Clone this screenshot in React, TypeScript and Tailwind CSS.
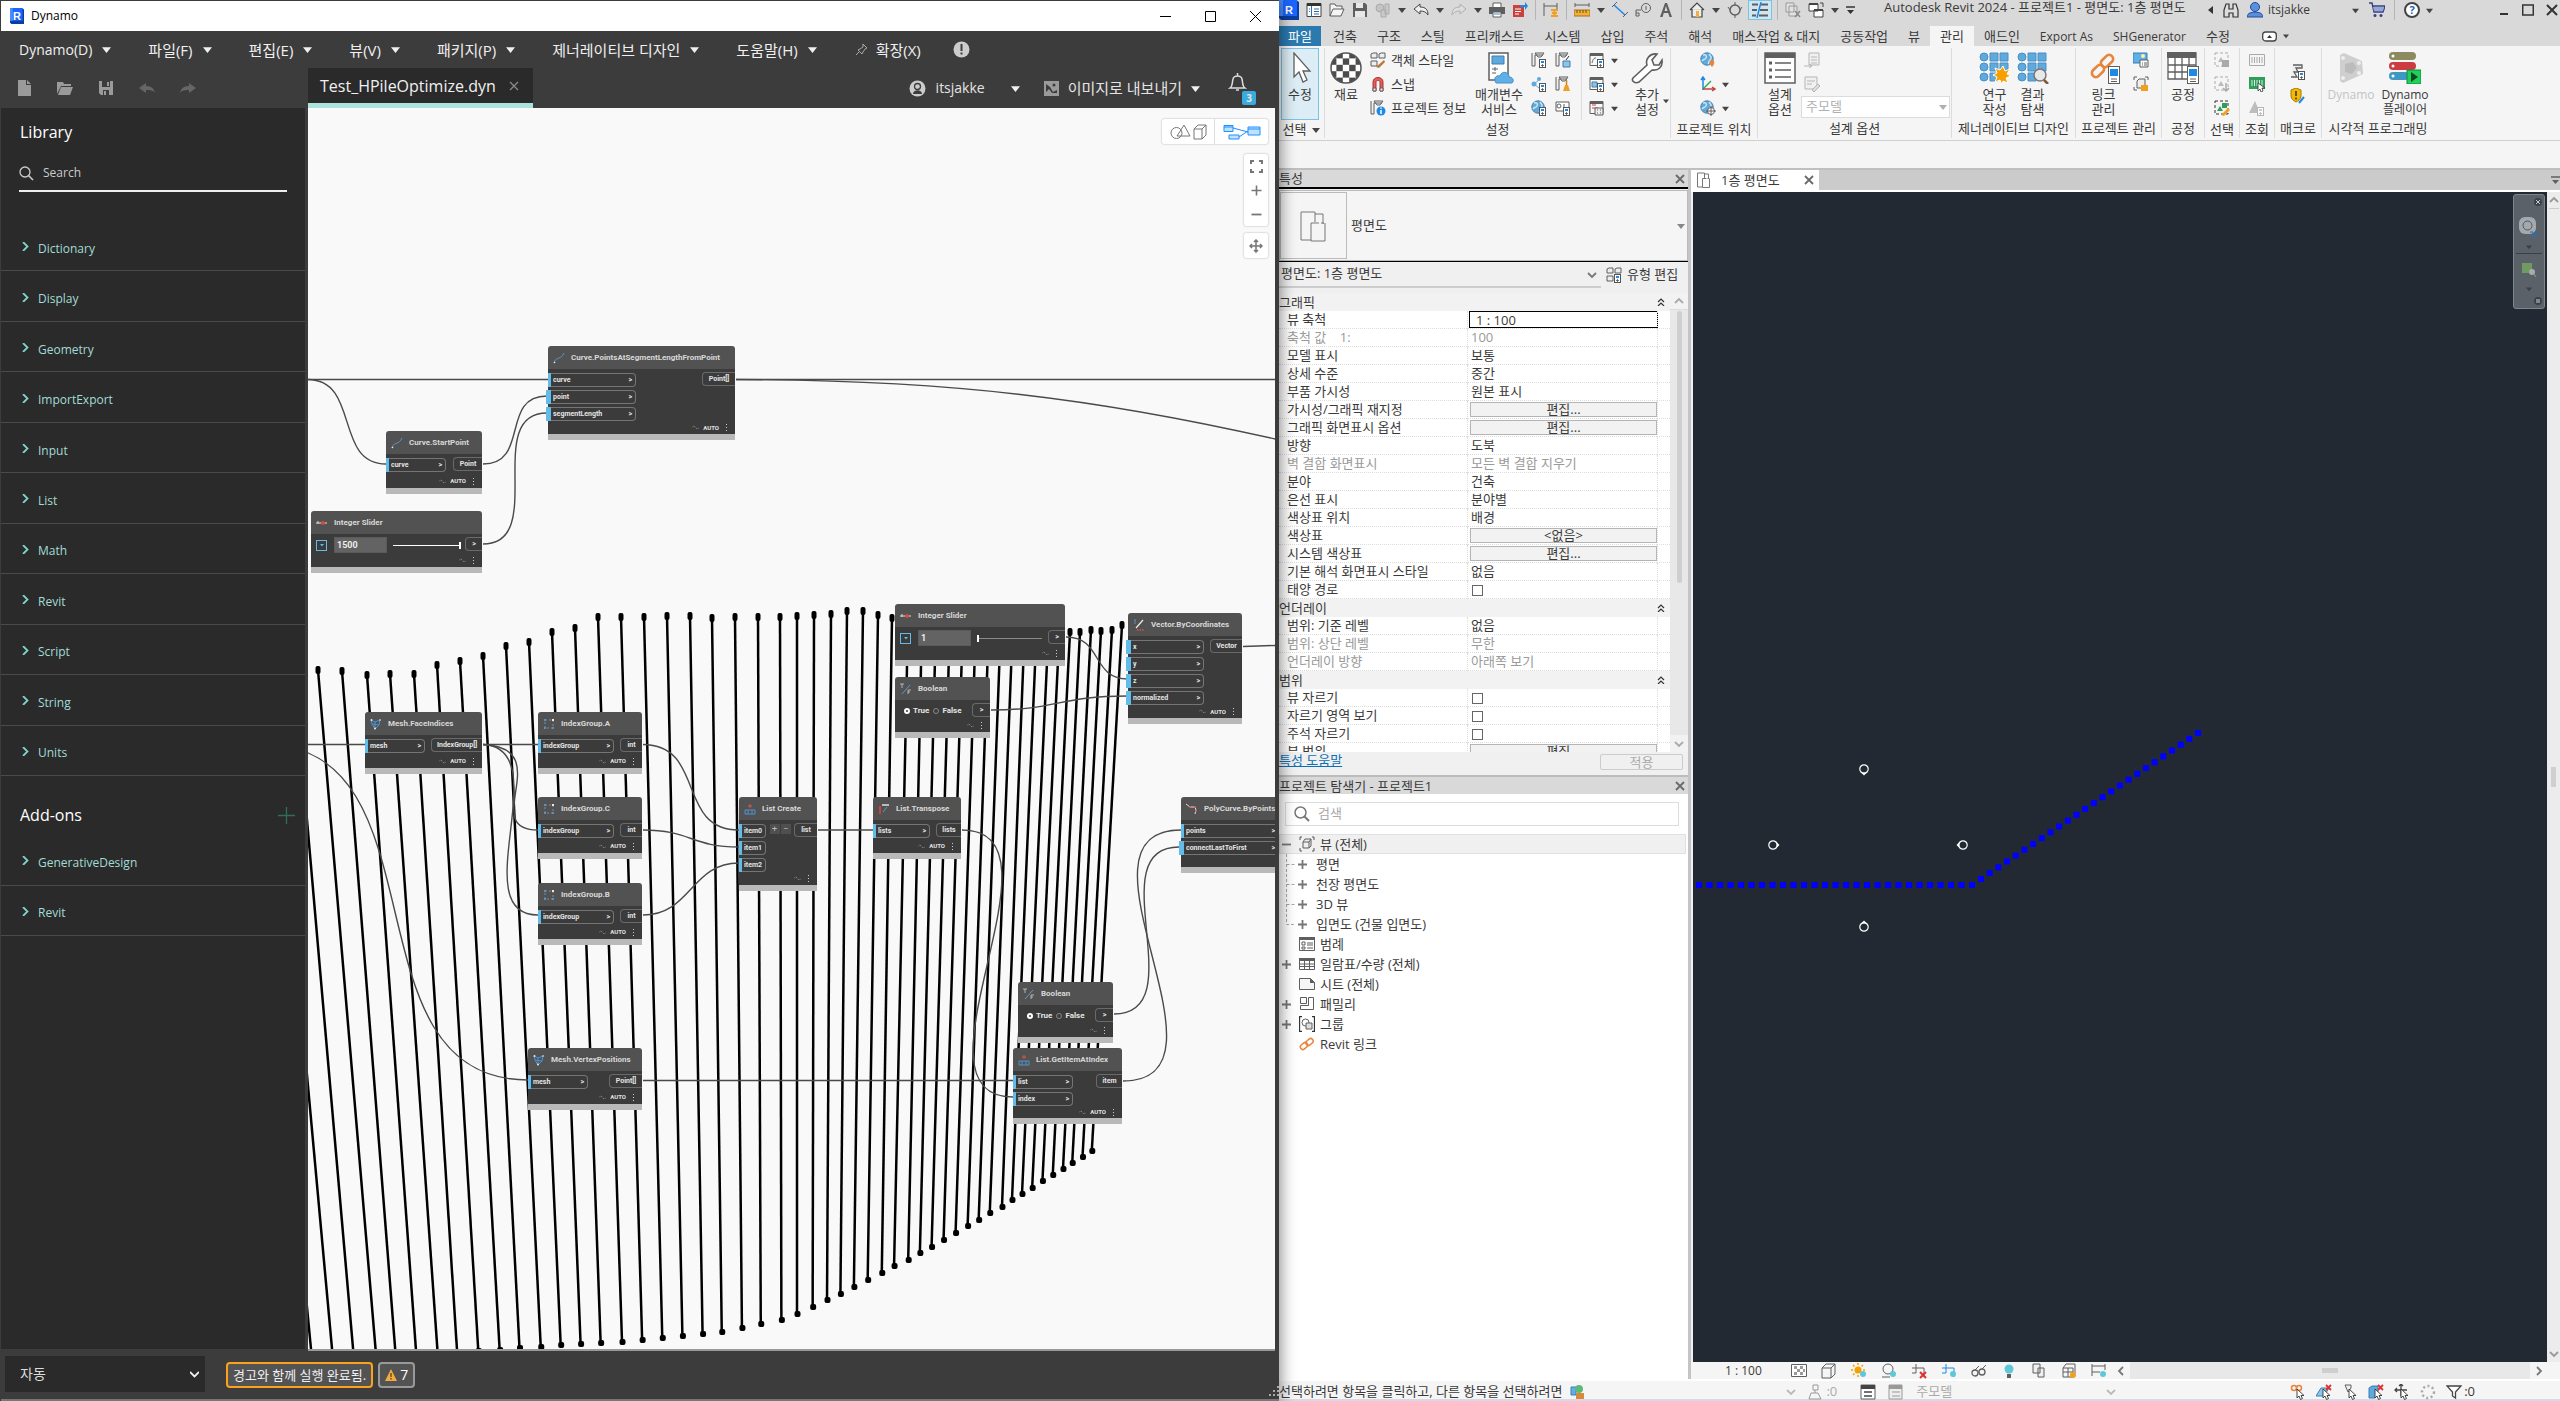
import React from "react";

type Kids = { children?: React.ReactNode };

/* ---------- icon helpers ---------- */

function Ico({ s = 16, b = 16, children, className = "" }: Kids & { s?: number; b?: number; className?: string }) {
  return (
    <svg width={s} height={s} viewBox={`0 0 ${b} ${b}`} fill="none" className={`shrink-0 ${className}`} aria-hidden="true">
      {children}
    </svg>
  );
}

function Tri({ c = "#444", w = 7 }: { c?: string; w?: number }) {
  return (
    <svg width={w} height={w} viewBox="0 0 8 8" className="shrink-0" aria-hidden="true">
      <path d="M0 2h8L4 7z" fill={c} />
    </svg>
  );
}

const G = "#5f5f5f";

function ParamBadge({ x = 8, y = 7, dim = false }: { x?: number; y?: number; dim?: boolean }) {
  const c = dim ? "#b5b5b5" : "#555";
  return (
    <g>
      <rect x={x + 0.5} y={y + 0.5} width="6" height="8" fill="#fff" stroke={c} />
      <rect x={x + 2} y={y + 2} width="3" height="2" fill={dim ? "#ccc" : "#1e88e5"} />
      <path d={`M${x + 2} ${y + 6.5}h3M${x + 3.5} ${y + 5}v3`} stroke={c} strokeWidth=".8" />
    </g>
  );
}

function Globe() {
  return (
    <g>
      <circle cx="7" cy="7" r="6.2" fill="#5fa9dd" stroke="#4a7fa5" />
      <path d="M3 3c3-1 4 1 3 3s-3 1-4 3M9 2c2 2 3 4 1 6s-1 3-2 4" stroke="#cfe6f5" strokeWidth="1.4" />
    </g>
  );
}

function RevitLogo({ w = 20, h = 20 }: { w?: number; h?: number }) {
  return (
    <span className="relative inline-flex shrink-0 items-center justify-center">
      <svg width={w} height={h} viewBox="0 0 20 20" preserveAspectRatio="none" aria-hidden="true">
        <path d="M0 0h17l3 2v18H2l-2-2z" fill="#0a3ea0" />
        <path d="M0 0h18v16H0z" fill="#1a66ff" />
        <path d="M0 0h4v16H0z" fill="#4a8cff" />
      </svg>
      <span className="absolute font-['Liberation_Sans',sans-serif] text-[11px] leading-[12px] font-bold text-white">R</span>
    </span>
  );
}

/* ---------- Dynamo: graph ---------- */

type Port = { t: string; wide?: boolean };
type GNode = {
  id: string;
  title: string;
  x: number;
  y: number;
  w: number;
  h: number;
  icon: string;
  ins?: Port[];
  inW?: number;
  out?: string;
  outW?: number;
  auto?: boolean;
  body?: "slider" | "bool" | "list";
  value?: string;
  pos?: number;
};

const NODES: GNode[] = [
  { id: "seg", title: "Curve.PointsAtSegmentLengthFromPoint", x: 240, y: 238, w: 187, h: 94, icon: "curve", ins: [{ t: "curve" }, { t: "point", wide: true }, { t: "segmentLength", wide: true }], inW: 88, out: "Point[]", outW: 33, auto: true },
  { id: "start", title: "Curve.StartPoint", x: 78, y: 323, w: 96, h: 63, icon: "curve", ins: [{ t: "curve" }], inW: 60, out: "Point", outW: 29, auto: true },
  { id: "sl1", title: "Integer Slider", x: 3, y: 403, w: 171, h: 62, icon: "slider", out: ">", outW: 17, body: "slider", value: "1500", pos: 100 },
  { id: "face", title: "Mesh.FaceIndices", x: 57, y: 604, w: 117, h: 62, icon: "mesh", ins: [{ t: "mesh" }], inW: 60, out: "IndexGroup[]", outW: 51, auto: true },
  { id: "iga", title: "IndexGroup.A", x: 230, y: 604, w: 104, h: 62, icon: "group", ins: [{ t: "indexGroup" }], inW: 76, out: "int", outW: 22, auto: true },
  { id: "igc", title: "IndexGroup.C", x: 230, y: 689, w: 104, h: 62, icon: "group", ins: [{ t: "indexGroup" }], inW: 76, out: "int", outW: 22, auto: true },
  { id: "igb", title: "IndexGroup.B", x: 230, y: 775, w: 104, h: 62, icon: "group", ins: [{ t: "indexGroup" }], inW: 76, out: "int", outW: 22, auto: true },
  { id: "vert", title: "Mesh.VertexPositions", x: 220, y: 940, w: 114, h: 62, icon: "mesh", ins: [{ t: "mesh" }], inW: 60, out: "Point[]", outW: 33, auto: true },
  { id: "lc", title: "List Create", x: 431, y: 689, w: 78, h: 94, icon: "list", ins: [{ t: "item0" }, { t: "item1" }, { t: "item2" }], inW: 27, out: "list", outW: 23, body: "list" },
  { id: "sl2", title: "Integer Slider", x: 587, y: 496, w: 170, h: 62, icon: "slider", out: ">", outW: 17, body: "slider", value: "1", pos: 0 },
  { id: "b1", title: "Boolean", x: 587, y: 569, w: 95, h: 61, icon: "bool", out: ">", outW: 18, body: "bool" },
  { id: "vec", title: "Vector.ByCoordinates", x: 820, y: 505, w: 114, h: 111, icon: "vector", ins: [{ t: "x", wide: true }, { t: "y", wide: true }, { t: "z", wide: true }, { t: "normalized", wide: true }], inW: 76, out: "Vector", outW: 32, auto: true },
  { id: "tr", title: "List.Transpose", x: 565, y: 689, w: 88, h: 62, icon: "transpose", ins: [{ t: "lists" }], inW: 57, out: "lists", outW: 25, auto: true },
  { id: "poly", title: "PolyCurve.ByPoints", x: 873, y: 689, w: 150, h: 76, icon: "poly", ins: [{ t: "points" }, { t: "connectLastToFirst", wide: true }], inW: 98 },
  { id: "b2", title: "Boolean", x: 710, y: 874, w: 95, h: 61, icon: "bool", out: ">", outW: 18, body: "bool" },
  { id: "get", title: "List.GetItemAtIndex", x: 705, y: 940, w: 109, h: 76, icon: "list", ins: [{ t: "list" }, { t: "index" }], inW: 60, out: "item", outW: 26, auto: true },
];

function NodeIcon({ k }: { k: string }) {
  return (
    <Ico s={12} b={12}>
      {k === "curve" && <><path d="M1 11c1-4 3-4 5-5s3-1 5-5" stroke="#5d9ad6" /><circle cx="1.5" cy="10.5" r=".8" fill="#eee" /></>}
      {k === "slider" && <><path d="M0 6h11" stroke="#ddd" /><circle cx="7" cy="6" r="2" fill="#d24a43" /><path d="M2 4v3" stroke="#ddd" /></>}
      {k === "mesh" && <><path d="M1 2l4 2 5-2-1 5-4 4-3-5zM5 4l0 7M2 6l7 1" stroke="#4f93cf" /><circle cx="1.5" cy="2" r="1" fill="#dfe9f2" /><circle cx="10" cy="2" r="1" fill="#8fc2ea" /><circle cx="5" cy="10.5" r="1" fill="#dfe9f2" /></>}
      {k === "group" && <><path d="M2 2h8v8H2z" stroke="#8a8a8a" strokeDasharray="2 2" /><path d="M1 1h2v2H1zM9 9h2v2H9zM1 9h2v2H1z" fill="#4f93cf" /><path d="M9 1h2v2H9z" fill="#e8e8e8" /></>}
      {k === "list" && <><path d="M1 7h10v4H1zM4 7v4M8 7v4" stroke="#4f93cf" /><path d="M4 3h4M6 1v4" stroke="#d9544f" /></>}
      {k === "bool" && <><path d="M2 11L10 2" stroke="#5d9ad6" /><path d="M0 1h4M2 1v4M8 11V7h3M8 9h2" stroke="#ccc" strokeWidth=".8" /></>}
      {k === "vector" && <><path d="M3 9L10 1" stroke="#eee" strokeWidth="1.2" /><path d="M1 1l2 0M2 1v4" stroke="#5d9ad6" strokeWidth=".8" /><path d="M4 11h7" stroke="#d9544f" strokeWidth="1.5" strokeDasharray="1.5 1" /></>}
      {k === "transpose" && <><path d="M1 3h2v8H1z" fill="#c8433d" /><path d="M4 1h7v2H4z" fill="#bbb" /><path d="M5 9l4-5" stroke="#5d9ad6" /></>}
      {k === "poly" && <><path d="M0 1l4 3 5 0 1 3-1 4" stroke="#ddd" /><circle cx="4" cy="4" r="1" fill="#d9544f" /><circle cx="9" cy="4" r="1" fill="#d9544f" /><circle cx="10" cy="8" r="1" fill="#d9544f" /></>}
    </Ico>
  );
}

function GraphNode({ n }: { n: GNode }) {
  return (
    <section
      className="absolute flex flex-col overflow-visible text-[#e4e4e4]"
      style={{ left: n.x, top: n.y, width: n.w, height: n.h }}
    >
      <header className="flex h-[23px] shrink-0 items-center gap-[6px] rounded-t-[3px] bg-[#525252] pl-[5px]">
        <NodeIcon k={n.icon} />
        <h3 className="min-w-0 flex-1 text-[8px] leading-[12px] font-bold whitespace-nowrap text-[#d8d8d8]">{n.title}</h3>
      </header>
      <div className="flex min-h-0 flex-1 flex-col justify-between bg-[#3b3b3b] pt-[3px]">
        <div className="flex items-start justify-between">
          {n.ins && (
            <div className="flex flex-col gap-[2px]">
              {n.ins.map((p) => (
                <div key={p.t} className="flex h-[15px] items-center" style={{ width: n.inW }}>
                  <i className={`h-[14px] shrink-0 bg-[#63bbe7] ${p.wide ? "-ml-[2px] w-[5px]" : "w-[3px]"}`} />
                  <span className="flex h-[14px] min-w-0 flex-1 items-center justify-between rounded-r-[4px] border border-l-0 border-[#757575] pr-[3px] pl-[2px] text-[7px] leading-[10px] font-bold">
                    <span className="whitespace-nowrap">{p.t}</span>
                    {n.body !== "list" && <span>&gt;</span>}
                  </span>
                </div>
              ))}
            </div>
          )}
          {n.body === "list" && (
            <div className="flex gap-px pt-[1px]">
              <button aria-label="Add item" className="h-[10px] w-[10px] bg-[#4f4f4f] text-[9px] leading-[9px] text-[#bbb]">+</button>
              <button aria-label="Remove item" className="h-[10px] w-[10px] bg-[#4f4f4f] text-[9px] leading-[9px] text-[#bbb]">−</button>
            </div>
          )}
          {n.body === "slider" && (
            <div className="flex min-w-0 flex-1 items-center pl-[5px]">
              <button aria-label="Slider settings" className="flex h-[11px] w-[11px] items-center justify-center border border-[#63bbe7]"><Tri c="#63bbe7" w={4} /></button>
              <input aria-label={`${n.id} value`} defaultValue={n.value} className="ml-[7px] h-[16px] w-[53px] border border-[#5a5a5a] bg-[#636363] pl-[2px] text-[9px] leading-[12px] font-bold text-[#eee]" />
              <span className="relative mx-[6px] flex h-[16px] flex-1 items-center">
                <i className={`h-px w-full ${n.pos ? "bg-white" : "bg-[#8a8a8a]"}`} />
                <i className="absolute h-[7px] w-[2px] bg-white" style={{ left: `${n.pos}%` }} />
              </span>
            </div>
          )}
          {n.body === "bool" && (
            <div className="flex h-[15px] items-center pl-[9px] text-[8px] leading-[12px] font-bold">
              <label className="flex items-center gap-[3px]">
                <input type="radio" name={n.id} defaultChecked className="h-[6px] w-[6px] appearance-none rounded-full border border-[#888] checked:border-2 checked:border-white" />
                True
              </label>
              <label className="ml-[4px] flex items-center gap-[3px]">
                <input type="radio" name={n.id} className="h-[6px] w-[6px] appearance-none rounded-full border border-[#888]" />
                False
              </label>
            </div>
          )}
          {n.out && (
            <div className="flex h-[14px] shrink-0 items-center justify-center rounded-l-[4px] border border-r-0 border-[#6a6a6a] text-[7px] leading-[10px] font-bold" style={{ width: n.outW }}>
              {n.out}
            </div>
          )}
        </div>
        <div className="flex h-[14px] items-center justify-end gap-[4px] pr-[5px] text-[6px] leading-[8px] font-bold">
          <Ico s={7} b={8}><path d="M0 4l2-2 2 2 2 2 2-2" stroke="#8a8a8a" strokeDasharray="2 1" /></Ico>
          {n.auto && <span>AUTO</span>}
          <Ico s={7} b={7}><path d="M3 0h1v1H3zM3 3h1v1H3zM3 6h1v1H3z" fill="#ccc" /></Ico>
        </div>
      </div>
      <i className="h-[6px] shrink-0 bg-[#b9b9b9]" />
    </section>
  );
}

/* Wires, in canvas coordinates. */
const WIRES = [
  "M0 271.500H240",
  "M0 271.500C52 272 26 356 78 356",
  "M175 356C222 356 192 288 239 288",
  "M175 436C240 436 174 305 239 305",
  "M428 271.500H980",
  "M428 271.500C640 272 790 290 980 334",
  "M0 636.500H57",
  "M-46 636C140 636 34 972 220 972",
  "M175 636.500H230",
  "M175 636.500C250 640 170 722 230 722",
  "M175 636.500C250 640 155 807 230 807",
  "M335 636.500C398 637 368 722 431 722",
  "M335 722C383 722 383 739 431 739",
  "M335 807C383 807 383 755 431 755",
  "M510 722H565",
  "M654 722C767 722 592 989 705 989",
  "M335 972.500H705",
  "M758 529C795 529 783 571 820 571",
  "M683 602C750 602 750 588 820 588",
  "M935 538.500L980 537",
  "M815 973C937 973 751 722 873 722",
  "M806 906C887 906 790 739 871 739",
];

/* Piles: [x at head, y at head, x at y=1130 window line, y of foot]. */
const PILES: [number, number, number, number][] = [
  [246, 671, 290, 1360], [270, 671, 312, 1360], [294, 671, 334, 1360],
  [318, 670, 357, 1360], [342, 671, 378, 1360], [367, 675, 400, 1360], [390, 674, 422, 1360], [414, 674, 443, 1360],
  [437, 665, 465, 1351], [460, 661, 487, 1350], [483, 656, 508, 1348], [506, 646, 530, 1347], [529, 642, 551, 1345],
  [552, 632, 572, 1344], [575, 628, 593, 1343], [598, 617, 615, 1342], [621, 617, 636, 1340], [644, 617, 657, 1338],
  [667, 616, 678, 1336], [690, 616, 699, 1334], [712, 618, 719, 1332], [735, 617, 740, 1328], [758, 617, 760, 1324],
  [780, 617, 781, 1320], [797, 616, 797, 1314], [814, 615, 813, 1307], [831, 614, 828, 1300], [847, 611, 842, 1294],
  [863, 611, 856, 1287], [878, 615, 870, 1280], [892, 618, 884, 1273], [908, 620, 897, 1266], [922, 620, 911, 1260],
  [936, 620, 923, 1253], [950, 620, 935, 1247], [963, 620, 947, 1240], [976, 620, 959, 1233], [989, 620, 971, 1226],
  [1001, 620, 982, 1220], [1013, 620, 993, 1213], [1025, 620, 1005, 1207], [1037, 620, 1015, 1200], [1049, 620, 1025, 1194],
  [1060, 620, 1035, 1188], [1070, 632, 1045, 1181], [1080, 632, 1055, 1175], [1091, 630, 1065, 1169], [1101, 631, 1074, 1163],
  [1112, 630, 1084, 1157], [1122, 625, 1093, 1151],
];

function Canvas() {
  return (
    <main className="relative min-w-0 flex-1 overflow-hidden border-b-2 border-[#999] bg-[#f9f9f9] font-['Roboto',sans-serif]">
      <svg className="absolute inset-0 h-full w-full" aria-hidden="true">
        <g transform="translate(-308 -108)">
          {PILES.map(([x0, y0, xm, y1], i) => {
            const x1 = x0 + ((xm - x0) * (y1 - y0)) / (1130 - y0);
            return (
              <g key={i}>
                <path d={`M${x0} ${y0}L${x1} ${y1}`} stroke="#000" strokeWidth="2.500" />
                <rect x={x0 - 2.5} y={y0 - 4} width="5" height="8" rx="2" />
                <rect x={x1 - 2.5} y={y1 - 3} width="6" height="6" rx="2" />
              </g>
            );
          })}
        </g>
        {WIRES.map((d) => (
          <path key={d} d={d} fill="none" stroke="#4a4a4a" strokeWidth="1.400" />
        ))}
      </svg>
      {NODES.map((n) => (
        <GraphNode key={n.id} n={n} />
      ))}
      <div className="absolute top-[11px] right-[7px] flex flex-col items-end">
        <div className="flex h-[25px] rounded-[2px] bg-white shadow-[0_0_2px_rgba(0,0,0,0.35)]">
          <button aria-label="3D preview" className="flex w-[53px] items-center justify-center border-r border-[#ddd]">
            <svg width="37" height="16" viewBox="0 0 37 16" fill="none" stroke="#777" aria-hidden="true">
              <circle cx="6.500" cy="9" r="5.500" /><path d="M7 12L14 1l6 11zM24 5h8v10h-8zM24 5l4-4h8v10l-4 4M32 5l4-4" />
            </svg>
          </button>
          <button aria-label="Graph view" className="flex w-[53px] items-center justify-center">
            <svg width="38" height="16" viewBox="0 0 38 16" fill="#bfe3ff" stroke="#1e90ff" aria-hidden="true">
              <path d="M10 4l15 4M16 13l9-6" fill="none" />
              <path d="M1 1.500h9v6H1zM1 3h9M25 3h12v8H25zM25 5h12M6 11h10v4H6z" />
            </svg>
          </button>
        </div>
        <div className="mt-[10px] flex h-[72px] w-[24px] flex-col items-center justify-around rounded-[2px] bg-white shadow-[0_0_2px_rgba(0,0,0,0.35)]">
          <button aria-label="Fit view"><Ico s={13} b={13}><path d="M1 4V1h3M9 1h3v3M12 9v3H9M4 12H1V9" stroke="#777" strokeWidth="2" /></Ico></button>
          <button aria-label="Zoom in"><Ico s={13} b={13}><path d="M1.500 6.500h10M6.500 1.500v10" stroke="#777" strokeWidth="1.600" /></Ico></button>
          <button aria-label="Zoom out"><Ico s={13} b={13}><path d="M1.500 6.500h10" stroke="#777" strokeWidth="1.800" /></Ico></button>
        </div>
        <div className="mt-[7px] flex h-[25px] w-[24px] items-center justify-center rounded-[2px] bg-white shadow-[0_0_2px_rgba(0,0,0,0.35)]">
          <button aria-label="Pan"><Ico s={14} b={14}><path d="M7 1v12M1 7h12M5 3l2-2 2 2M5 11l2 2 2-2M3 5L1 7l2 2M11 5l2 2-2 2" stroke="#777" strokeWidth="1.500" /></Ico></button>
        </div>
      </div>
    </main>
  );
}

/* ---------- Dynamo: chrome ---------- */

const MENUS = ["Dynamo(D)", "파일(F)", "편집(E)", "뷰(V)", "패키지(P)", "제너레이티브 디자인", "도움말(H)"];
const LIB = ["Dictionary", "Display", "Geometry", "ImportExport", "Input", "List", "Math", "Revit", "Script", "String", "Units"];

function LibRow({ t }: { t: string }) {
  return (
    <li className="border-b border-[#4a4a4a]">
      <button className="flex h-full w-full items-center gap-2 pt-[6px] pl-[20px] text-[12px] leading-[16px] text-[#a3dcd6]">
        <Ico s={9} b={9} className="mb-[4px]"><path d="M2 0l4.500 4.500L2 9" stroke="#7fd3ca" strokeWidth="1.800" /></Ico>
        {t}
      </button>
    </li>
  );
}

function Dynamo() {
  const g = "#9a9a9a";
  return (
    <div className="relative z-10 flex min-w-0 flex-[1278_1_0%] flex-col border-t border-l border-[#3c3c3c] bg-[#3c3c3c] font-['Open_Sans','Noto_Sans_CJK_KR',sans-serif] text-white shadow-[2px_0_14px_rgba(0,0,0,0.45)]">
      <div className="flex h-[30px] shrink-0 items-center bg-white pl-[9px] text-black">
        <RevitLogo w={14} h={16} />
        <h1 className="ml-[7px] text-[12px] leading-[18px]">Dynamo</h1>
        <div className="ml-auto flex items-center gap-[34px] pr-[18px]">
          <button aria-label="Minimize"><Ico s={11} b={11}><path d="M0 5.500h11" stroke="#000" /></Ico></button>
          <button aria-label="Maximize"><Ico s={11} b={11}><path d="M.5.5h10v10H.5z" stroke="#000" /></Ico></button>
          <button aria-label="Close"><Ico s={11} b={11}><path d="M0 0l11 11M11 0L0 11" stroke="#000" /></Ico></button>
        </div>
      </div>
      <nav className="flex h-[37px] shrink-0 items-center text-[15px] leading-[20px] text-[#f0f0f0]">
        {MENUS.map((m) => (
          <button key={m} className={`flex items-center gap-[10px] pr-[19px] pl-[18px] whitespace-nowrap ${m.startsWith("Dynamo") ? "text-[14px]" : ""}`}>
            {m}
            <Tri c="#f0f0f0" w={9} />
          </button>
        ))}
        <button className="ml-[19px] flex items-center gap-[8px] whitespace-nowrap">
          <Ico s={13} b={13}><path d="M8 1l4 4-2 1-2 3-1 2-4-4 2-1 3-2zM5 8l-4 4" stroke="#aaa" /></Ico>
          확장(X)
        </button>
        <button aria-label="Alert" className="ml-[32px]">
          <Ico s={17} b={17}><circle cx="8.500" cy="8.500" r="8" fill="#ccc" /><path d="M8.500 3v7M8.500 11.500v2" stroke="#3c3c3c" strokeWidth="2" /></Ico>
        </button>
      </nav>
      <div className="flex h-[40px] shrink-0 items-center">
        <div className="flex w-[307px] items-center gap-[25px] pl-[15px]">
          <button aria-label="New"><Ico><path d="M2 0h8v5h5v11H2zM11 0l4 4h-4z" fill={g} /></Ico></button>
          <button aria-label="Open"><Ico><path d="M0 2h6l1 2h7v2H4L0 14zM4 7h12l-3 8H1z" fill={g} /></Ico></button>
          <button aria-label="Save"><Ico><path d="M1 1h14v14H3l-2-2zM4 1v6h8V1zM5 10v5h6v-5zM9 2h2v4H9zM6 11h2v4H6z" fill={g} fillRule="evenodd" /></Ico></button>
          <button aria-label="Undo"><Ico><path d="M0 8l7-5v3c6 0 8 3 9 7-2-3-5-3-9-3v3z" fill="#666" /></Ico></button>
          <button aria-label="Redo"><Ico><path d="M16 8L9 3v3c-6 0-8 3-9 7 2-3 5-3 9-3v3z" fill="#666" /></Ico></button>
        </div>
        <div className="flex h-full items-center border-b-[5px] border-[#abe2dc] bg-[#2a2a2a] pr-[14px] pl-[12px]">
          <span className="text-[16px] leading-[22px] text-[#f0f0f0]">Test_HPileOptimize.dyn</span>
          <button aria-label="Close tab" className="ml-[13px]"><Ico s={10} b={10}><path d="M1 1l8 8M9 1L1 9" stroke="#8a8a8a" strokeWidth="1.300" /></Ico></button>
        </div>
        <div className="ml-auto flex items-center pr-[32px] text-[14px] leading-[20px] text-[#e4e4e4]">
          <button className="flex items-center gap-[10px]">
            <Ico s={17} b={17}><circle cx="8.500" cy="8.500" r="8" fill="#ccc" /><circle cx="8.500" cy="6.500" r="3" stroke="#3c3c3c" strokeWidth="1.300" /><path d="M4 14c0-5 9-5 9 0z" fill="#3c3c3c" /></Ico>
            itsjakke
            <span className="ml-[16px] flex"><Tri c="#f0f0f0" w={9} /></span>
          </button>
          <button className="ml-[24px] flex items-center gap-[9px] text-[15px] whitespace-nowrap">
            <Ico s={15} b={15}><path d="M0 0h15v15H0zM2 3v8l3-3 3 4 5 0V9L9 11 6 6z" fill={g} fillRule="evenodd" /><circle cx="10" cy="4" r="1.500" fill="#3c3c3c" /></Ico>
            이미지로 내보내기
            <Tri c="#f0f0f0" w={9} />
          </button>
          <button aria-label="Notifications, 3" className="relative mb-[11px] ml-[28px]">
            <Ico s={19} b={19}><path d="M2 15c3-2 2-6 3-9 1-4 8-4 9 0s0 7 3 9zM8 17h3M9.500 0v3" stroke="#ddd" strokeWidth="1.500" /></Ico>
            <span className="absolute top-[18px] left-[14px] flex h-[14px] w-[14px] items-center justify-center rounded-[2px] bg-[#38abdf] text-[10px] leading-[12px] font-bold">3</span>
          </button>
        </div>
      </div>
      <div className="flex min-h-0 flex-1 pr-[4px]">
        <aside className="mr-[3px] mb-[2px] flex w-[304px] shrink-0 flex-col overflow-hidden bg-[#2a2a2a]">
          <h2 className="mt-[14px] ml-[19px] text-[16px] leading-[20px]">Library</h2>
          <label className="mt-[20px] mr-[18px] ml-[18px] flex h-[30px] items-center gap-[9px] border-b-2 border-[#eee] pb-[6px]">
            <Ico s={15} b={15}><circle cx="6" cy="6" r="5" stroke="#ccc" strokeWidth="1.300" /><path d="M9.500 9.500L14 14" stroke="#ccc" strokeWidth="1.600" /></Ico>
            <input aria-label="Search" placeholder="Search" className="min-w-0 flex-1 bg-transparent text-[12px] leading-[16px] placeholder:text-[#ccc]" />
          </label>
          <ul className="mt-[29px] grid h-[555px] shrink-0 auto-rows-fr">
            {LIB.map((t) => <LibRow key={t} t={t} />)}
          </ul>
          <div className="mt-[29px] flex items-center justify-between pr-[10px] pl-[19px]">
            <h2 className="text-[16px] leading-[20px]">Add-ons</h2>
            <button aria-label="Add"><Ico s={17} b={17}><path d="M0 8.500h17M8.500 0v17" stroke="#2f6f56" strokeWidth="1.300" /></Ico></button>
          </div>
          <ul className="mt-[10px] grid h-[101px] shrink-0 auto-rows-fr">
            <LibRow t="GenerativeDesign" />
            <LibRow t="Revit" />
          </ul>
        </aside>
        <Canvas />
      </div>
      <footer className="flex h-[50px] shrink-0 items-center border-b-2 border-[#777] pl-[4px] text-[13px] leading-[18px]">
        <div className="relative mb-[2px] h-[36px] w-[200px]">
          <select aria-label="실행 모드" className="h-full w-full appearance-none bg-[#2a2a2a] pl-[15px] text-[14px] text-[#ddd]"><option>자동</option></select>
          <Ico s={9} b={9} className="pointer-events-none absolute top-[14px] right-[6px]"><path d="M0 2l4.500 4.500L9 2" stroke="#eee" strokeWidth="1.800" /></Ico>
        </div>
        <div className="ml-[21px] flex h-[26px] items-center rounded-[4px] border-2 border-[#faa21b] bg-[#535353] px-[5px] whitespace-nowrap text-[#f0f0f0]">경고와 함께 실행 완료됨.</div>
        <button className="ml-[5px] flex h-[26px] items-center gap-[3px] rounded-[4px] border-2 border-[#999] bg-[#535353] px-[5px] text-[14px]">
          <Ico s={12} b={12}><path d="M6 0l6 12H0z" fill="#f2ab42" /><path d="M6 4v4M6 9v1.500" stroke="#6b4a12" strokeWidth="1.400" /></Ico>
          7
        </button>
        <span className="ml-auto self-end pb-[2px]"><Ico s={11} b={11}><path d="M9 0h2v2H9zM9 4h2v2H9zM5 4h2v2H5zM9 8h2v2H9zM5 8h2v2H5zM1 8h2v2H1z" fill="#aaa" /></Ico></span>
      </footer>
    </div>
  );
}

/* ---------- Revit ---------- */

const QAT: { n: string; i: React.ReactNode }[] = [
  { n: "보기", i: <><path d="M1 1.500h14v13H1z" fill="#fff" stroke="#444" /><path d="M1 1h14v3H1z" fill="#333" /><path d="M5.500 4v11M8 7h5M8 9.500h5M8 12h5M3 7h1M3 9.500h1" stroke="#2a6fb0" /></> },
  { n: "열기", i: <path d="M1 14V2h5l1 2h6v3M1 14l3-7h11l-3 7z" fill="#f5f5f5" stroke={G} /> },
  { n: "저장", i: <><path d="M1 1h12l2 2v12H1z" fill={G} /><path d="M4 1h7v5H4zM3 9h10v6H3z" fill="#e8e8e8" /></> },
  { n: "동기화", i: <><circle cx="5" cy="6" r="4" fill="#c4c4c4" stroke="#aaa" /><path d="M6 8h5v7H6zM10 2h4v10h-4z" fill="#c9c9c9" stroke="#aaa" /></> },
  { n: "|t", i: null },
  { n: "명령취소", i: <path d="M1 7l6-5v3c6 0 8 3 8 8-2-3-4-4-8-4v3z" stroke="#444" fill="#eee" /> },
  { n: "|t", i: null },
  { n: "명령복구", i: <path d="M15 7L9 2v3C3 5 1 8 1 13c2-3 4-4 8-4v3z" stroke="#b0b0b0" fill="#ddd" /> },
  { n: "|t", i: null },
  { n: "인쇄", i: <><path d="M4 1h8v5H4z" fill="#fff" stroke={G} /><path d="M0 5h16v7H0z" fill={G} /><path d="M4 10h8v5H4z" fill="#fff" stroke={G} /><path d="M5 12h6" stroke="#3a8fd0" /></> },
  { n: "내보내기", i: <><path d="M1 3h11v12H1z" fill="#c8433d" /><path d="M3 7h6M3 9.500h6M3 12h4" stroke="#fff" /><path d="M8 3h5V0l3 4-3 4V5H8z" fill="#1e88e5" /></> },
  { n: "|s", i: null },
  { n: "치수", i: <><path d="M1 1v13M14 1v6M1 4h13" stroke={G} /><path d="M8 8h7M9 11h5M11.500 8v7M8 14h7" stroke="#f0a020" strokeWidth="2" /></> },
  { n: "|s", i: null },
  { n: "측정", i: <><path d="M1 3h14M1 1v4M15 1v4" stroke={G} /><path d="M0 8h16v6H0z" fill="#f0b040" stroke="#a87410" /><path d="M3 8v3M6 8v3M9 8v3M12 8v3" stroke="#7a5200" /></> },
  { n: "|t", i: null },
  { n: "정렬 치수", i: <><path d="M2 3l11 10" stroke="#1e88e5" strokeWidth="1.500" /><path d="M0 5l5-5M11 15l5-5" stroke={G} /></> },
  { n: "태그", i: <><circle cx="11" cy="6" r="4.500" stroke={G} /><path d="M11 4v4M1 14V8h5M1 14h3v-3H1" stroke={G} /></> },
  { n: "문자", i: <path d="M2 15L7 1h2l5 14h-2.500l-1.300-4H5.800l-1.300 4zM6.500 9h3L8 4z" fill={G} fillRule="evenodd" /> },
  { n: "|s", i: null },
  { n: "3D", i: <><path d="M1 8l7-7 7 7M3 7v8h10V7" fill="#eee" stroke="#444" strokeWidth="1.200" /><path d="M7 9h3v6H7z" fill="#f0b040" /></> },
  { n: "|t", i: null },
  { n: "단면", i: <><circle cx="8" cy="8" r="5" stroke={G} strokeWidth="1.500" /><path d="M8 13v3M3 8l-2-3M13 8l2-3M8 3V0" stroke={G} /></> },
  { n: "|h", i: <><path d="M0 2.500h6M9 2.500h7M0 8h5M8 8h8M0 13.500h4M7 13.500h9" stroke={G} strokeWidth="2" /><path d="M9 0L5 16" stroke="#1e88e5" strokeWidth="1.500" /></> },
  { n: "|s", i: null },
  { n: "창 닫기", i: <><path d="M1 1h8v9H1zM4 4h8v10H4z" fill="#e2e2e2" stroke="#999" /><path d="M10 9l5 6M15 9l-5 6" stroke="#888" strokeWidth="1.500" /></> },
  { n: "창 전환", i: <><path d="M1 2h9v7H1zM6 8h9v7H6z" fill="#fff" stroke="#444" /><path d="M6 7h9v2H6zM1 1h9v2H1z" fill="#444" /><path d="M12 1h3v4" stroke="#444" /></> },
  { n: "|t", i: null },
];

const TABS = ["건축", "구조", "스틸", "프리캐스트", "시스템", "삽입", "주석", "해석", "매스작업 & 대지", "공동작업", "뷰", "관리", "애드인", "Export As", "SHGenerator", "수정"];

function Panel({ w, label, children, last }: Kids & { w: number; label: React.ReactNode; last?: boolean }) {
  return (
    <div className={`my-[2px] flex shrink-0 flex-col ${last ? "" : "border-r border-[#dcdcdc]"}`} style={{ width: w }}>
      <div className="flex h-[73px] justify-center">{children}</div>
      <div className="flex items-center justify-center gap-[6px] text-center leading-[19px] whitespace-nowrap">{label}</div>
    </div>
  );
}

function Big({ icon, lines, w, dim, latin, children }: Kids & { icon: React.ReactNode; lines: string[]; w: number; dim?: boolean; latin?: boolean }) {
  return (
    <button className={`relative flex shrink-0 flex-col items-center pt-[4px] leading-[15px] ${dim ? "text-[#c4c4c4]" : ""} ${latin ? "text-[12px]" : ""}`} style={{ width: w }}>
      <Ico s={32} b={32}>{icon}</Ico>
      <span className="mt-[3px] flex flex-col whitespace-nowrap">{lines.map((l) => <span key={l}>{l}</span>)}</span>
      {children}
    </button>
  );
}

function Col({ w, items, tri }: { w: number; items: React.ReactNode[]; tri?: boolean[] }) {
  return (
    <div className="flex shrink-0 flex-col" style={{ width: w }}>
      {items.map((it, i) => (
        <button key={i} aria-label={`도구 ${i + 1}`} className="flex h-[24px] items-center justify-center gap-[6px]">
          <Ico>{it}</Ico>
          {tri && (tri[i] ? <Tri /> : <i className="w-[7px]" />)}
        </button>
      ))}
    </div>
  );
}

const beam = <path d="M1 1v13h3V3h8M4 1h9l-3 4H7z" fill="#eee" stroke={G} />;
const winIcon = <><path d="M1 1.500h13v12H1z" fill="#f8f8f8" stroke={G} /><path d="M1 1h13v3H1z" fill={G} /></>;
const study = <><g fill="#5fa9dd" stroke="#4a8fc4"><circle cx="5" cy="5" r="4" /><path d="M11 1h8v8h-8zM21 1h8v8h-8zM11 11h8v8h-8zM21 11h8v8h-8zM11 21h8v8h-8z" /><circle cx="5" cy="15" r="4" /><circle cx="5" cy="25" r="4" /></g></>;
const chain = <g stroke="#e8843c" strokeWidth="2.600"><rect x="-4" y="-7" width="8" height="14" rx="4" transform="translate(10 19) rotate(45)" /><rect x="-4" y="-7" width="8" height="14" rx="4" transform="translate(19 9) rotate(45)" /></g>;

function Ribbon() {
  return (
    <div className="flex h-[95px] shrink-0 overflow-hidden border-b border-[#d0d0d0] bg-[#f5f5f5]">
      <Panel w={46} label={<>선택 <Tri w={8} /></>}>
        <button className="mr-[3px] flex h-[72px] w-[38px] flex-col items-center border border-[#7cc3e3] bg-[#dcedf5] pt-[3px] leading-[15px]">
          <Ico s={32} b={32}><path d="M10 1v24l5-5 4 10 4-2-4-9h7z" fill="#fff" stroke={G} strokeWidth="1.300" /></Ico>
          <span className="mt-[3px]">수정</span>
        </button>
      </Panel>
      <Panel w={346} label="설정">
        <Big w={42} lines={["재료"]} icon={<><defs><clipPath id="mat"><circle cx="16" cy="16" r="15" /></clipPath></defs><g clipPath="url(#mat)"><path d="M0 0h32v32H0z" fill="#fff" />{[0, 1, 2, 3, 4].map((r) => [0, 1, 2, 3, 4].map((c) => (r + c) % 2 === 0 ? null : <rect key={`${r}-${c}`} x={c * 6.4} y={r * 6.4} width="6.400" height="6.400" fill="#4c4c4c" />))}</g><circle cx="16" cy="16" r="15" stroke="#555" strokeWidth="1.500" /></>} />
        <div className="flex w-[104px] shrink-0 flex-col pl-[3px]">
          {[
            { t: "객체 스타일", i: <><path d="M1 2l2-1h4v5H1zM9 2l2-1h4v5H9zM1 9h6v5H1z" fill="#eee" stroke={G} /><path d="M6 15l8-7 1 2-6 6z" fill="#b87a3a" /></> },
            { t: "스냅", i: <><path d="M3 15V6c0-6 10-6 10 0v9h-3V6c0-2-4-2-4 0v9z" fill="#e0605c" stroke="#a33" /><path d="M3 12h3v3H3zM10 12h3v3h-3z" fill="#eee" stroke={G} /></> },
            { t: "프로젝트 정보", i: <>{beam}<circle cx="11" cy="11" r="4.500" fill="#1e88e5" /><path d="M11 10v4M11 7.500v1.200" stroke="#fff" strokeWidth="1.500" /></> },
          ].map((r) => (
            <button key={r.t} className="flex h-[24px] items-center gap-[5px] leading-[18px] whitespace-nowrap"><Ico>{r.i}</Ico>{r.t}</button>
          ))}
        </div>
        <Big w={56} lines={["매개변수", "서비스"]} icon={<><path d="M6 1h19v27H6z" fill="#fff" stroke={G} strokeWidth="1.500" /><path d="M9 4h12v8H9z" fill="#5fa9dd" stroke="#3a7fb5" /><path d="M9 17h6M9 21h4M12 15v4" stroke={G} /><path d="M13 31c-4-7 3-8 4-7 2-6 9-4 9 1 5 0 5 5 3 6z" fill="#5fb0e8" stroke="#4a8fc4" /></>} />
        <Col w={24} items={[<>{beam}<ParamBadge /></>, <><circle cx="3" cy="8" r="2.500" fill="#5fa9dd" /><circle cx="8" cy="3" r="2" fill="#5fa9dd" /><path d="M3 8l6-5M3 8l5 4" stroke="#5fa9dd" /><ParamBadge /></>, <><Globe /><ParamBadge /></>]} />
        <Col w={24} items={[<>{beam}<path d="M8 9h7v6H8z" fill="#8cc4ea" stroke="#3a7fb5" /><path d="M11 8l3-4" stroke="#333" /></>, <>{beam}<path d="M10 9h3l2 6H8z" fill="#f0a020" /><path d="M11.500 4v5" stroke="#c78820" strokeWidth="1.500" /></>, <><path d="M1 2h13v9H1z" fill="#fff" stroke={G} /><circle cx="4" cy="6" r="2" stroke={G} /><path d="M9 4v4" stroke={G} /><ParamBadge /></>]} />
        <i className="w-[7px] shrink-0 border-r border-[#dcdcdc]" />
        <Col w={42} tri={[true, true, true]} items={[<>{winIcon}<path d="M3 11c1-4 2-5 4-5" stroke={G} /><ParamBadge /></>, <>{winIcon}<path d="M3 6h5v5H3z" fill="#8cc4ea" stroke="#3a7fb5" /><ParamBadge /></>, <>{winIcon}<path d="M3 5l4 0M3 8h6" stroke="#c8433d" /><path d="M6 8h8v7H6z" fill="#eee" stroke={G} /><path d="M8 10h1M11 10h1M8 13h1M11 13h1" stroke={G} /></>]} />
        <Big w={46} lines={["추가", "설정"]} icon={<path d="M2 26L16 13c-2-6 3-12 10-11l-5 6 2 5 5 0 3-5c1 7-4 11-10 10L8 30c-4 2-8-1-6-4z" fill="#fff" stroke={G} strokeWidth="1.600" />}>
          <span className="absolute top-[50px] right-[1px]"><Tri w={6} /></span>
        </Big>
      </Panel>
      <Panel w={87} label="프로젝트 위치">
        <Col w={50} tri={[false, true, true]} items={[<><Globe /><path d="M12 8c3 0 3 4 0 7-3-3-3-7 0-7z" fill="#e8843c" /></>, <><path d="M3 14V2M1 4l2-3 2 3" stroke="#1e88e5" strokeWidth="1.500" /><path d="M3 13l8-8" stroke="#2fae4e" strokeWidth="1.500" /><path d="M3 13h11M12 11l3 2-3 2" stroke="#c8433d" strokeWidth="1.500" /></>, <><Globe /><circle cx="11" cy="11" r="3.500" fill="#fff" stroke={G} /><path d="M11 6v10M6 11h10" stroke={G} /></>]} />
      </Panel>
      <Panel w={194} label="설계 옵션">
        <Big w={42} lines={["설계", "옵션"]} icon={<><path d="M1 1h30v30H1z" fill="#fff" stroke={G} strokeWidth="1.500" /><path d="M1 1h30v5H1z" fill={G} /><path d="M5 11h3M5 18h3M5 25h3" stroke={G} strokeWidth="3" /><path d="M11 11h16M11 18h16M11 25h16" stroke={G} strokeWidth="1.300" /></>} />
        <div className="flex flex-col">
          <button aria-label="세트에 추가" className="flex h-[24px] items-center pl-[3px]"><Ico><path d="M5 1h10v12H5z" fill="#f0f0f0" stroke="#b5b5b5" /><path d="M7 5h6M7 8h6M7 11h6M0 14h7M5 12l3 2-3 2" stroke="#b5b5b5" /></Ico></button>
          <button aria-label="옵션 편집" className="flex h-[24px] items-center pl-[3px]"><Ico><path d="M1 1h12v12H1z" fill="#f0f0f0" stroke="#b5b5b5" /><path d="M3 5h8M3 8h5M8 14l6-6 2 2-6 6z" stroke="#b5b5b5" fill="#ddd" /></Ico></button>
          <div className="relative">
            <select aria-label="설계 옵션" disabled className="h-[22px] w-[149px] appearance-none border border-[#dcdcdc] bg-white pl-[4px] text-[#b0b0b0] opacity-100"><option>주모델</option></select>
            <span className="pointer-events-none absolute top-[7px] right-[3px]"><Tri c="#b0b0b0" w={8} /></span>
          </div>
        </div>
      </Panel>
      <Panel w={124} label="제너레이티브 디자인">
        <Big w={38} lines={["연구", "작성"]} icon={<>{study}<path d="M24 14l2 5 5-2-3 5 4 2-5 2 2 5-5-2-1 4-2-5-5 2 2-5-4-2 4-2-2-5 5 2z" fill="#f5a000" stroke="#fff" /></>} />
        <Big w={38} lines={["결과", "탐색"]} icon={<>{study}<circle cx="23" cy="23" r="6" fill="#e8e8e8" stroke="#777" strokeWidth="1.500" /><path d="M27 28l4 4" stroke="#7a5a3a" strokeWidth="2.500" /></>} />
      </Panel>
      <Panel w={86} label="프로젝트 관리">
        <Big w={44} lines={["링크", "관리"]} icon={<>{chain}<rect x="20.500" y="14.500" width="11" height="17" fill="#fff" stroke={G} /><path d="M22 17h8v7h-8z" fill="#1e88e5" /><path d="M23 27h6M23 29.500h6" stroke={G} /></>} />
        <Col w={30} items={[<><path d="M0 1h14v10H0z" fill="#5fb0e8" stroke="#3a7fb5" /><circle cx="10" cy="4" r="2" fill="#fff3a0" /><path d="M7 8h8v7H7z" fill="#fff" stroke={G} /><path d="M9 11h1M11 11h3M9 13h1M11 13h3" stroke={G} /></>, <><path d="M1 4V1h3M12 1h3v3M1 11v3h3" stroke={G} /><path d="M4 5l2-2h6v7l-2 2H4z" fill="#eee" stroke={G} /><path d="M8 9h7v6H8z" fill="#f0a020" /></>]} />
      </Panel>
      <Panel w={43} label="공정">
        <Big w={42} lines={["공정"]} icon={<><path d="M1 1h28v26H1zM8 6v21M15 6v21M22 6v21M1 13h28M1 20h28" fill="#fff" stroke={G} strokeWidth="1.300" /><path d="M0 0h29v6H0z" fill={G} /><rect x="20.500" y="14.500" width="11" height="17" fill="#fff" stroke={G} /><path d="M22 17h8v7h-8z" fill="#1e88e5" /><path d="M23 27h6M23 29.500h6" stroke={G} /></>} />
      </Panel>
      <Panel w={35} label="선택">
        <Col w={34} items={[<><path d="M1 1h13v13H1z" stroke="#aaa" strokeDasharray="3 2" /><path d="M4 10l3-5 3 5z" fill="#bbb" /><path d="M8 8h7v7H8z" fill="#aaa" /></>, <><path d="M1 1h13v13H1z" stroke="#aaa" strokeDasharray="3 2" /><path d="M4 10l3-5 3 5z" fill="#bbb" /><path d="M12 7v8M9 12l3 3 3-3" stroke="#aaa" strokeWidth="1.500" /></>, <><path d="M1 1h13v13H1z" stroke="#333" strokeDasharray="3 2" /><path d="M3 11l3-5 3 5zM8 3h5v5H8z" fill="#2f9e5a" /><path d="M7 15l7-7 2 2-6 6z" fill="#f0a020" /></>]} />
      </Panel>
      <Panel w={35} label="조회">
        <Col w={34} items={[<><path d="M.5 2.500h15v11H.5z" stroke="#aaa" fill="#f5f5f5" /><path d="M3 5v6M5.500 5v6M8 5v6M10.500 5v6M13 5v6" stroke="#aaa" /></>, <><path d="M0 1h16v12H0z" fill="#2f9e5a" /><path d="M3 4v6M5.500 4v6M8 4v6M10.500 4v6M13 4v6" stroke="#d5f0de" /><path d="M9 7v8l2-2 1 3 2-1-1-3h3z" fill="#fff" stroke="#333" strokeWidth=".8" /></>, <><path d="M0 13L6 1l5 12z" fill="#bdbdbd" /><ParamBadge dim /></>]} />
      </Panel>
      <Panel w={47} label="매크로">
        <div className="pt-[12px]"><Col w={40} items={[<><path d="M3 1h9v3H6l2 4H4l3 5H1" stroke={G} strokeWidth="1.300" fill="#eee" /><ParamBadge /></>, <><path d="M1 2l5-2 5 2v6c0 3-3 5-5 6-2-1-5-3-5-6z" fill="#f5b800" stroke="#a87a00" /><path d="M6 3v5M6 9.500v2" stroke="#333" strokeWidth="1.500" /><path d="M9 15l5-6" stroke="#1e88e5" strokeWidth="2" /></>]} /></div>
      </Panel>
      <Panel w={112} last label="시각적 프로그래밍">
        <Big w={54} dim latin lines={["Dynamo"]} icon={<><path d="M5 3l4-2 18 8 1 13-20 9-3-2z" fill="#cfcfcf" /><path d="M10 12l8-2 4 6-5 6-7-2z" fill="#bcbcbc" /><circle cx="8" cy="6" r="2" fill="#eee" /><circle cx="24" cy="11" r="2" fill="#eee" /><circle cx="8" cy="26" r="2" fill="#eee" /><circle cx="24" cy="21" r="2" fill="#eee" /></>} />
        <Big w={54} latin lines={["Dynamo", "플레이어"]} icon={<><rect y="0" width="27" height="8" rx="4" fill="#8c8a5e" /><rect y="10" width="27" height="8" rx="4" fill="#cc3b40" /><rect y="20" width="20" height="8" rx="4" fill="#3f98c4" /><circle cx="4" cy="4" r="1.500" fill="#fff" /><circle cx="4" cy="14" r="1.500" fill="#fff" /><circle cx="4" cy="24" r="1.500" fill="#fff" /><path d="M18 18h14v14H18z" fill="#1fd05a" stroke="#128a3a" /><path d="M22 20l7 5-7 5z" fill="#0c4a22" /></>} />
      </Panel>
    </div>
  );
}

function PlanIcon({ s = 16, c = "#777" }: { s?: number; c?: string }) {
  return (
    <Ico s={s} b={32}>
      <path d="M13 30H3V2h14v12" stroke={c} strokeWidth={s === 16 ? 2 : 1} />
      <path d="M17 4h8v10" stroke={c} strokeWidth={s === 16 ? 2 : 1} />
      <path d="M13 13v18h14V13" stroke={c} strokeWidth={s === 16 ? 2 : 1} />
      <path d="M13 13h14" stroke={c} strokeWidth={s === 16 ? 2 : 1} strokeDasharray="3 2" />
    </Ico>
  );
}

type Row = { l: string; v?: string; k?: "btn" | "chk" | "in" | "head"; dim?: boolean };
const ROWS: Row[] = [
  { l: "그래픽", k: "head" },
  { l: "뷰 축척", v: "1 : 100", k: "in" },
  { l: "축척 값    1:", v: "100", dim: true },
  { l: "모델 표시", v: "보통" },
  { l: "상세 수준", v: "중간" },
  { l: "부품 가시성", v: "원본 표시" },
  { l: "가시성/그래픽 재지정", v: "편집...", k: "btn" },
  { l: "그래픽 화면표시 옵션", v: "편집...", k: "btn" },
  { l: "방향", v: "도북" },
  { l: "벽 결합 화면표시", v: "모든 벽 결합 지우기", dim: true },
  { l: "분야", v: "건축" },
  { l: "은선 표시", v: "분야별" },
  { l: "색상표 위치", v: "배경" },
  { l: "색상표", v: "<없음>", k: "btn" },
  { l: "시스템 색상표", v: "편집...", k: "btn" },
  { l: "기본 해석 화면표시 스타일", v: "없음" },
  { l: "태양 경로", k: "chk" },
  { l: "언더레이", k: "head" },
  { l: "범위: 기준 레벨", v: "없음" },
  { l: "범위: 상단 레벨", v: "무한", dim: true },
  { l: "언더레이 방향", v: "아래쪽 보기", dim: true },
  { l: "범위", k: "head" },
  { l: "뷰 자르기", k: "chk" },
  { l: "자르기 영역 보기", k: "chk" },
  { l: "주석 자르기", k: "chk" },
  { l: "뷰 범위", v: "편집...", k: "btn" },
];

function Chev({ d, c = "#777" }: { d: "u" | "d" | "l" | "r"; c?: string }) {
  const p = { u: "M1 7l4-4 4 4", d: "M1 3l4 4 4-4", l: "M7 1L3 5l4 4", r: "M3 1l4 4-4 4" }[d];
  return <Ico s={10} b={10}><path d={p} stroke={c} strokeWidth="1.800" /></Ico>;
}

function CloseX() {
  return <Ico s={10} b={10}><path d="M1 1l8 8M9 1L1 9" stroke="#6a6a6a" strokeWidth="1.800" /></Ico>;
}

function Properties() {
  return (
    <section className="flex shrink-0 flex-col bg-[#f0f0f0]">
      <div className="flex h-[19px] items-center justify-between border-b-2 border-black bg-[#d9d9d9] pr-[3px]">
        <h2 className="leading-[17px]">특성</h2>
        <button aria-label="특성 닫기"><CloseX /></button>
      </div>
      <button className="mt-px flex h-[71px] items-center border border-[#bbb] bg-[#f5f5f5] text-left">
        <span className="flex h-[67px] w-[67px] items-center justify-center border border-[#bbb]"><PlanIcon s={32} /></span>
        <span className="ml-[4px] flex-1">평면도</span>
        <span className="mr-[2px] flex"><Tri c="#888" w={8} /></span>
      </button>
      <div className="flex h-[32px] items-start border-t border-black">
        <div className="relative h-[26px] w-[322px] border-b-2 border-[#ccc]">
          <select aria-label="유형" className="h-full w-full appearance-none bg-transparent pl-[2px]"><option>평면도: 1층 평면도</option></select>
          <span className="pointer-events-none absolute top-[8px] right-[4px]"><Chev d="d" /></span>
        </div>
        <button className="ml-[5px] flex h-[25px] items-center gap-[5px]">
          <Ico><path d="M1 2l2-1h4v5H1zM9 2l2-1h4v5H9zM1 9h6v5H1z" fill="#eee" stroke={G} /><ParamBadge /></Ico>
          유형 편집
        </button>
      </div>
      <div className="flex h-[459px] overflow-hidden">
        <div className="w-[391px] bg-white">
          <table className="w-full table-fixed border-separate border-spacing-0 text-left leading-[17px]">
            <colgroup><col className="w-[188px]" /><col className="w-[190px]" /><col /></colgroup>
            <tbody>
              {ROWS.map((r, i) =>
                r.k === "head" ? (
                  <tr key={i} className="bg-[#f2f2f2]">
                    <th colSpan={2} className="h-[18px] p-0 font-normal">{r.l}</th>
                    <td className="p-0"><button aria-label={`${r.l} 접기`} className="block"><Ico s={8} b={8}><path d="M1 4l3-3 3 3M1 8l3-3 3 3" stroke="#333" strokeWidth="1.200" /></Ico></button></td>
                  </tr>
                ) : (
                  <tr key={i} className={r.dim ? "text-[#9a9a9a]" : ""}>
                    <th className="h-[18px] border-b border-dotted border-[#ddd] p-0 pl-[8px] font-normal whitespace-pre">{r.l}</th>
                    <td className="h-[18px] border-b border-l border-dotted border-[#ddd] p-0 pl-[2px]">
                      {r.k === "btn" && <button className="block h-[15px] w-[187px] border border-[#b5b5b5] bg-[#f2f2f2] text-center leading-[13px]">{r.v}</button>}
                      {r.k === "chk" && <input type="checkbox" aria-label={r.l} className="mt-[2px] ml-[2px] block h-[11px] w-[11px] appearance-none border border-[#666] bg-white" />}
                      {r.k === "in" && <input aria-label={r.l} defaultValue={r.v} className="-ml-px block h-[17px] w-[189px] border border-black pl-[6px] leading-[15px]" />}
                      {!r.k && <span className="block pl-px">{r.v}</span>}
                    </td>
                    <td className="border-b border-l border-dotted border-[#ddd] p-0" />
                  </tr>
                ),
              )}
            </tbody>
          </table>
        </div>
        <div className="flex flex-1 flex-col items-center bg-[#e8e8e8]">
          <span className="flex h-[17px] w-full items-center justify-center border-b border-[#ddd] bg-[#f2f2f2]"><Chev d="u" c="#aaa" /></span>
          <i className="mt-px h-[272px] w-[5px] rounded-full bg-[#cfcfcf]" />
          <span className="mt-auto flex h-[17px] w-full items-center justify-center bg-[#f2f2f2]"><Chev d="d" c="#aaa" /></span>
        </div>
      </div>
      <div className="flex h-[25px] items-start justify-between border-b-2 border-[#bcbcbc] pr-[5px]">
        <a href="#help" className="leading-[17px] text-[#0a6fb5] underline">특성 도움말</a>
        <button disabled className="mt-[2px] h-[16px] w-[83px] rounded-[2px] border border-[#ccc] leading-[14px] text-[#aaa]">적용</button>
      </div>
    </section>
  );
}

const treeIcons: Record<string, React.ReactNode> = {
  view: <><path d="M3 1H1v3M13 1h2v3M1 12v3h2M15 12v3h-2" stroke="#555" /><path d="M4 6l2-3h6v7l-2 2H4zM4 6h6v6M10 6l2-3" fill="#eee" stroke={G} /></>,
  legend: <><path d="M.5 1.500h15v13H.5z" stroke={G} /><path d="M0 1h16v3H0z" fill={G} /><path d="M3 6h3v3H3zM8 7h6M8 9h6M3 11h3v2H3zM8 12h6" stroke={G} /></>,
  sched: <><path d="M.5 2.500h15v11H.5zM.5 8h15M.5 10.500h15M5.500 5v8M10.500 5v8" stroke={G} /><path d="M0 2h16v3H0z" fill={G} /></>,
  sheet: <><path d="M.5 2.500h11l4 4v7H.5z" fill="#f5f5f5" stroke={G} /><path d="M11 2v5h5z" fill={G} /></>,
  fam: <path d="M1.500 1.500h6v6h-6zM9.500 1.500h5v12h-13v-4h8z" stroke={G} />,
  group: <><path d="M3 .5H.5v15H3M13 .5h2.500v15H13" stroke="#333" strokeWidth="1.300" /><circle cx="6.500" cy="6.500" r="3.500" stroke={G} /><path d="M7 7h6v6H7z" fill="#ddd" stroke={G} /></>,
  link: <g stroke="#e8843c" strokeWidth="1.500"><rect x="-2.500" y="-4" width="5" height="8" rx="2.500" transform="translate(5 10) rotate(50)" /><rect x="-2.500" y="-4" width="5" height="8" rx="2.500" transform="translate(10.500 6) rotate(50)" /></g>,
};

const TREE: { t: string; i?: string; e?: "+" | "-" }[] = [
  { t: "뷰 (전체)", i: "view", e: "-" },
  { t: "평면", e: "+" },
  { t: "천장 평면도", e: "+" },
  { t: "3D 뷰", e: "+" },
  { t: "입면도 (건물 입면도)", e: "+" },
  { t: "범례", i: "legend" },
  { t: "일람표/수량 (전체)", i: "sched", e: "+" },
  { t: "시트 (전체)", i: "sheet" },
  { t: "패밀리", i: "fam", e: "+" },
  { t: "그룹", i: "group", e: "+" },
  { t: "Revit 링크", i: "link" },
];

function Browser() {
  return (
    <section className="flex min-h-0 flex-1 flex-col bg-white">
      <div className="flex h-[17px] shrink-0 items-center justify-between bg-[#d9d9d9] pr-[3px]">
        <h2 className="leading-[16px]">프로젝트 탐색기 - 프로젝트1</h2>
        <button aria-label="탐색기 닫기"><CloseX /></button>
      </div>
      <label className="mx-[6px] mt-[8px] flex h-[24px] w-[394px] shrink-0 items-center gap-[8px] border border-[#ddd] pl-[8px]">
        <Ico><circle cx="6.500" cy="6.500" r="5.500" stroke="#777" strokeWidth="1.500" /><path d="M10.500 10.500L15 15" stroke="#777" strokeWidth="2" /></Ico>
        <input aria-label="탐색기 검색" placeholder="검색" className="min-w-0 flex-1 placeholder:text-[#aaa]" />
      </label>
      <ul className="mt-[8px] flex flex-col leading-[18px]">
        {TREE.map((n, idx) => (
          <li key={n.t} className={`flex h-[20px] items-center border ${idx === 0 ? "mr-[2px] border-[#e0e0e0] bg-[#f0f0f0]" : "border-transparent"}`}>
            {!n.i && (
              <svg width="9" height="20" className="ml-[6px] shrink-0" aria-hidden="true"><path d={idx === 4 ? "M.5 0v10.500h8" : "M.5 0v20M.5 10.500h8"} fill="none" stroke="#aaa" strokeDasharray="3 2" /></svg>
            )}
            <button className={`flex items-center ${n.i ? "gap-[5px] pl-[2px]" : "gap-[9px] pl-[3px]"}`}>
              <Ico s={9} b={9}>{n.e && <path d={n.e === "+" ? "M0 4.500h9M4.500 0v9" : "M0 4.500h9"} stroke="#777" strokeWidth="1.800" />}</Ico>
              {n.i && <span className="ml-[3px]"><Ico>{treeIcons[n.i]}</Ico></span>}
              {n.t}
            </button>
          </li>
        ))}
      </ul>
    </section>
  );
}

const viewTools: React.ReactNode[] = [
  <><path d="M.5 1.500h15v12H.5z" fill="#fff" stroke={G} /><path d="M3 3h3v3H3zM9 3h3v3H9zM6 6h3v3H6zM12 6h2v3h-2zM3 9h3v3H3zM9 9h3v3H9z" fill="#999" /></>,
  <path d="M1 5l4-4h9v10l-4 4H1zM1 5h9v10M10 5l4-4" stroke={G} />,
  <><circle cx="7" cy="7" r="3.500" fill="#f5a000" /><path d="M7 0v2M7 12v2M0 7h2M12 7h2M2 2l1.500 1.500M12 2l-1.500 1.500M2 12l1.500-1.500" stroke="#f5a000" strokeWidth="1.500" /><circle cx="12" cy="11" r="3" fill="#5fc8d8" /></>,
  <><circle cx="7" cy="6" r="5" stroke={G} /><path d="M1 14h8" stroke="#aaa" strokeWidth="2" /><circle cx="12" cy="11" r="3" fill="#5fc8d8" /></>,
  <><path d="M1 5h12v9M5 1v9H1" stroke={G} /><path d="M9 9l6 6M15 9l-6 6" stroke="#e03030" strokeWidth="2" /></>,
  <><path d="M1 5h12v9M5 1v9H1" stroke="#1e88e5" /><circle cx="12" cy="11" r="3" fill="#5fc8d8" /></>,
  <><circle cx="4" cy="10" r="3" stroke={G} strokeWidth="1.300" /><circle cx="11" cy="9" r="3" stroke={G} strokeWidth="1.300" /><path d="M4 7l4-4M11 6l4-4" stroke={G} /></>,
  <><circle cx="8" cy="6" r="4.500" fill="#5fc8d8" /><path d="M6 11h4v4H6z" fill={G} /></>,
  <><path d="M2 1h7v9H2zM7 5h6v9H7z" fill="#eee" stroke={G} /></>,
  <><path d="M2 5h10v9H2zM2 5l3-4h9v9l-2 3M7 5v9M2 9h10" stroke={G} /><circle cx="12" cy="12" r="3" fill="#f0a020" /></>,
  <><path d="M1 1v12M14 1v6M1 3h13M1 9h8" stroke={G} /><circle cx="12" cy="11" r="3" fill="#5fc8d8" /></>,
];

const cur = <path d="M7 5v9l2-2 1.500 3.500 2-1-1.500-3h3z" fill="#fff" stroke="#333" strokeWidth=".9" />;
const statusTools: React.ReactNode[] = [
  <><circle cx="4" cy="4" r="2.500" stroke="#e8843c" strokeWidth="1.500" /><circle cx="9" cy="4" r="2.500" stroke="#e8843c" strokeWidth="1.500" />{cur}</>,
  <><path d="M0 12L5 4h8l-5 8z" fill="#8cc4ea" stroke="#3a7fb5" />{cur}<path d="M10 1l5 5M15 1l-5 5" stroke="#e03030" strokeWidth="1.800" /></>,
  <><path d="M3 1h6v3L6 8z" stroke={G} fill="#eee" />{cur}</>,
  <><path d="M1 4l3-2h6v9l-3 3H1z" fill="#5fa9dd" stroke="#3a7fb5" />{cur}<path d="M10 1l5 5M15 1l-5 5" stroke="#e03030" strokeWidth="1.800" /></>,
  <><path d="M7 0v12M1 6h12M5 2l2-2 2 2M3 4L1 6l2 2" stroke="#444" strokeWidth="1.300" />{cur}</>,
  <circle cx="8" cy="8" r="6" stroke="#aaa" strokeWidth="2.500" strokeDasharray="2 2.500" />,
  <path d="M1 2h14L9.500 8v6l-3-2V8z" stroke="#444" strokeWidth="1.300" fill="#fff" />,
];

function DrawingView() {
  const sq: [number, number][] = [];
  for (let i = 0; i < 27; i++) sq.push([6 + i * 10.5, 693]);
  for (let i = 0; i < 26; i++) sq.push([288 + i * 8.68, 687 - i * 5.84]);
  const marks: [number, number, number][] = [[171, 577, 0], [80, 653, -90], [270, 653, 90], [171, 735, 180]];
  return (
    <div className="flex min-w-0 flex-1 flex-col bg-[#f0f0f0]">
      <div className="flex h-[22px] shrink-0 border-b-2 border-white bg-[#cbcbcb]">
        <div className="flex w-[128px] items-center bg-white pr-[5px] pl-[5px]">
          <PlanIcon />
          <span className="ml-[9px] flex-1 leading-[18px]">1층 평면도</span>
          <button aria-label="뷰 닫기"><CloseX /></button>
        </div>
        <button aria-label="탭 목록" className="ml-auto"><Ico s={9} b={9}><path d="M0 1h9" stroke={G} strokeWidth="1.500" /><path d="M1 4h7L4.500 8z" fill={G} /></Ico></button>
      </div>
      <div className="flex min-h-0 flex-1 pl-[2px]">
        <div className="relative min-w-0 flex-1 overflow-hidden bg-[#222932]">
          <svg className="absolute inset-0 h-full w-full" aria-hidden="true">
            {sq.map(([x, y], i) => <rect key={i} x={x - 3} y={y - 3} width="6" height="6" fill="#00f" />)}
            {marks.map(([x, y, a]) => (
              <g key={`${x}-${y}`} transform={`translate(${x} ${y}) rotate(${a})`}>
                <circle r="4.200" fill="none" stroke="#fff" strokeWidth="1.200" />
                <path d="M-4 2.500L0 6.500 4 2.500Q0 5 -4 2.500z" fill="#fff" />
              </g>
            ))}
          </svg>
          <div className="absolute top-[2px] right-[2px] flex h-[115px] w-[32px] flex-col items-center rounded-[3px] border border-[#7f858c] bg-[#5b6169] py-[3px]">
            <button aria-label="탐색 막대 닫기" className="self-end pr-[2px]"><Ico s={8} b={8}><circle cx="4" cy="4" r="4" fill="#3b4047" /><path d="M2 2l4 4M6 2L2 6" stroke="#ccc" /></Ico></button>
            <button aria-label="조종 휠" className="mt-[10px]"><Ico s={22} b={22}><rect x="1" y="1" width="17" height="17" rx="6" fill="#a4a9af" /><circle cx="9.500" cy="9.500" r="4.500" stroke="#555" /><path d="M12 16h3v4h-3M17 16v5c4 0 4-5 0-5" stroke="#2f6fb0" /></Ico></button>
            <span className="mt-[6px]"><Tri c="#3b4047" w={6} /></span>
            <i className="mt-[3px] h-px w-[26px] bg-[#3b4047]" />
            <button aria-label="줌" className="mt-[8px]"><Ico><path d="M1 1h10v10H1z" fill="#6f9a62" /><circle cx="11" cy="10" r="3" fill="#aaa" /><path d="M13 12l2 3" stroke="#999" /></Ico></button>
            <span className="mt-[8px]"><Tri c="#3b4047" w={6} /></span>
            <span className="mt-auto self-end pr-[2px]"><Ico s={8} b={8}><circle cx="4" cy="4" r="4" fill="#3b4047" /><path d="M2 3h4M2 5h4" stroke="#ccc" /></Ico></span>
          </div>
        </div>
        <div className="flex w-[13px] shrink-0 flex-col items-center justify-between bg-[#ececec]">
          <span className="flex h-[17px] items-center border-b border-[#ccc]"><Chev d="u" c="#999" /></span>
          <i className="h-[20px] w-[5px] bg-[#cfcfcf]" />
          <span className="flex h-[17px] items-center"><Chev d="d" c="#999" /></span>
        </div>
      </div>
      <div className="flex h-[17px] shrink-0 items-center bg-[#f5f5f5] pl-[34px] text-[12px]">
        <span className="w-[66px] leading-[16px]">1 : 100</span>
        <div className="flex gap-[14px]">
          {viewTools.map((t, i) => <button key={i} aria-label={`뷰 조절 ${i + 1}`}><Ico>{t}</Ico></button>)}
        </div>
        <span className="ml-[9px] flex"><Chev d="l" /></span>
        <span className="mx-[4px] flex h-full flex-1 items-center justify-center bg-[#e8e8e8]"><i className="h-[5px] w-[16px] bg-[#cfcfcf]" /></span>
        <span className="mr-[16px] flex"><Chev d="r" /></span>
      </div>
    </div>
  );
}

function Revit() {
  return (
    <div className="flex min-w-0 flex-[1281_1_0%] flex-col overflow-hidden bg-[#d9d9d9] font-['Open_Sans','Noto_Sans_CJK_KR',sans-serif] text-[13px] text-[#3a3a3a]">
      <div className="flex h-[26px] shrink-0 items-start">
        <div className="flex h-[20px] items-center gap-[7px]">
          <RevitLogo />
          {QAT.map((q, i) =>
            q.n === "|t" ? <Tri key={i} w={8} /> : q.n === "|s" ? <i key={i} className="h-[20px] w-px bg-[#b5b5b5]" /> : q.n === "|h" ? (
              <button key={i} aria-label="가는 선" className="-mx-[2px] flex h-[20px] w-[24px] items-center justify-center border border-[#7cc3e3] bg-[#cfe6f2]"><Ico>{q.i}</Ico></button>
            ) : (
              <button key={i} aria-label={q.n}><Ico>{q.i}</Ico></button>
            ),
          )}
          <Ico s={9} b={9}><path d="M0 1h9" stroke="#333" strokeWidth="1.500" /><path d="M1 4h7L4.500 8z" fill="#333" /></Ico>
        </div>
        <h1 className="ml-[29px] text-[13px] leading-[14px] whitespace-nowrap">Autodesk Revit 2024 - 프로젝트1 - 평면도: 1층 평면도</h1>
        <div className="ml-auto flex h-[20px] items-center text-[12px]">
          <Ico s={8} b={8}><path d="M6 0v8L1 4z" fill="#333" /></Ico>
          <button aria-label="검색" className="ml-[8px]"><Ico><path d="M1 15V8l2-6h3v5h4V2h3l2 6v7h-5v-4H6v4z" fill="#ddd" stroke="#333" strokeWidth="1.200" /></Ico></button>
          <button className="ml-[8px] flex w-[105px] items-center gap-[5px]">
            <Ico><circle cx="8" cy="5" r="4.500" fill="#5a8fe0" stroke="#234a9a" /><path d="M0 15c1-5 4-4 8-5 4 1 7 0 8 5z" fill="#5a8fe0" stroke="#234a9a" /></Ico>
            itsjakke
          </button>
          <Tri />
          <button aria-label="앱 스토어" className="ml-[10px]"><Ico><path d="M0 1h3l2 9h9l2-6H4" stroke="#3a3f7a" strokeWidth="1.400" fill="none" /><path d="M4 5h11l-1 4H5z" fill="#8fa8dd" /><circle cx="6" cy="13.500" r="1.500" fill="#3a3f7a" /><circle cx="12" cy="13.500" r="1.500" fill="#3a3f7a" /></Ico></button>
          <i className="mx-[9px] h-[20px] w-px bg-[#b5b5b5]" />
          <button aria-label="도움말" className="flex h-[16px] w-[16px] items-center justify-center rounded-full border-2 border-[#444] bg-white text-[11px] leading-[12px] font-bold text-[#1e60c0]">?</button>
          <span className="ml-[6px]"><Tri /></span>
          <button aria-label="최소화" className="ml-[65px]"><Ico s={12} b={12}><path d="M2 10h8" stroke="#333" strokeWidth="2" /></Ico></button>
          <button aria-label="최대화" className="ml-[12px]"><Ico s={12} b={12}><path d="M.7 1h10.600v10H.7z" stroke="#333" strokeWidth="1.500" /></Ico></button>
          <button aria-label="닫기" className="mr-[2px] ml-[12px]"><Ico s={12} b={12}><path d="M1 1l10 10M11 1L1 11" stroke="#333" strokeWidth="2" /></Ico></button>
        </div>
      </div>
      <nav className="flex h-[20px] shrink-0 items-stretch leading-[19px] whitespace-nowrap">
        <button className="mr-[2px] w-[42px] bg-[#2a7ab0] text-white">파일</button>
        {TABS.map((t) => (
          <button key={t} className={`px-[10px] ${t === "관리" ? "bg-[#f5f5f5]" : ""} ${/^[A-Z]/.test(t) ? "text-[12px]" : ""}`}>{t}</button>
        ))}
        <button aria-label="리본 최소화" className="ml-[22px] flex items-center gap-[6px]">
          <Ico s={15} b={15}><rect x=".7" y="3" width="13.600" height="9" rx="3" fill="#fff" stroke="#444" strokeWidth="1.300" /><path d="M5 9l2.500-3L10 9z" fill="#333" /></Ico>
          <Tri w={6} />
        </button>
      </nav>
      <Ribbon />
      <div className="h-[29px] shrink-0 border-b-2 border-[#bfbfbf] bg-[#f5f5f5]" />
      <div className="flex min-h-0 flex-1">
        <div className="flex w-[412px] shrink-0 flex-col border-r-[3px] border-[#c4c4c4]">
          <Properties />
          <Browser />
        </div>
        <DrawingView />
      </div>
      <footer className="flex h-[22px] shrink-0 items-center border-t-2 border-b-2 border-t-white border-b-[#d8d8e6] bg-[#f5f5f5] pt-[3px]">
        <p className="leading-[15px] whitespace-nowrap">선택하려면 항목을 클릭하고, 다른 항목을 선택하려면</p>
        <span className="ml-[8px]"><Ico><path d="M1 3h5v8H1z" fill="#5fb0e8" stroke="#3a7fb5" /><circle cx="9" cy="5" r="4" fill="#5fb878" /><path d="M6 9h8v6H6z" fill="#d88a3a" /></Ico></span>
        <span className="ml-[200px]"><Chev d="d" c="#bbb" /></span>
        <span className="ml-[12px] flex items-center gap-[2px] leading-[15px] text-[#aaa]"><Ico><path d="M5 1h5v5H5zM3 9h7l3 6H1zM7 6v3" stroke="#999" /></Ico>:0</span>
        <span className="ml-[23px] flex items-center gap-[12px] leading-[15px] text-[#aaa]">
          <Ico><path d="M1 1h14v14H1z" stroke={G} fill="#fff" /><path d="M1 1h14v4H1z" fill="#444" /><path d="M4 8h8M4 12h8" stroke="#444" strokeWidth="1.500" /></Ico>
          <Ico><path d="M1 1h13v14H1z" stroke="#999" fill="#eee" /><path d="M1 1h13v4H1z" fill="#999" /><path d="M4 8h8M4 12h8" stroke="#999" /></Ico>
          주모델
        </span>
        <span className="ml-[154px]"><Chev d="d" c="#bbb" /></span>
        <div className="ml-auto flex items-center gap-[10px] pr-[85px] leading-[15px]">
          {statusTools.map((t, i) => <button key={i} aria-label={`선택 옵션 ${i + 1}`}><Ico>{t}</Ico></button>)}
          <span className="-ml-[8px]">:0</span>
        </div>
      </footer>
    </div>
  );
}

export default function App() {
  return (
    <div className="flex h-screen w-full overflow-hidden bg-[#d9d9d9]">
      <Dynamo />
      <Revit />
    </div>
  );
}
